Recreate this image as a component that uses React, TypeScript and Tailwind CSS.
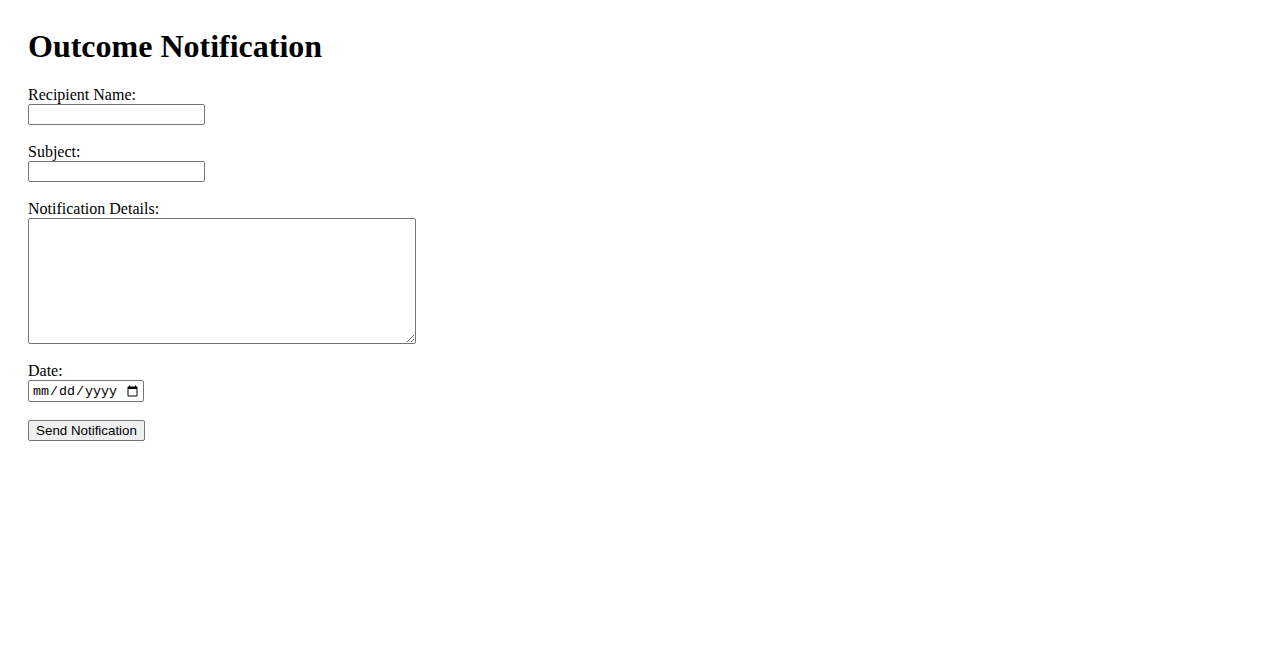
export default function App() {
  const inputCls =
    'block w-[177px] h-[21px] px-[2px] border border-[#767676] rounded-[2px] bg-white text-[13.33px] font-["Liberation_Sans",Arial,sans-serif]'

  return (
    <div className="min-h-screen bg-white p-[28px] text-black font-['Liberation_Serif','Times_New_Roman',serif]">
      <h1 className="text-[32px] font-bold leading-[37px] mb-[21px]">Outcome Notification</h1>
      <form onSubmit={(e) => e.preventDefault()}>
        <div className="mb-[18px]">
          <label htmlFor="recipient" className="block text-[16px] leading-[18px]">Recipient Name:</label>
          <input id="recipient" type="text" className={inputCls} />
        </div>
        <div className="mb-[18px]">
          <label htmlFor="subject" className="block text-[16px] leading-[18px]">Subject:</label>
          <input id="subject" type="text" className={inputCls} />
        </div>
        <div className="mb-[18px]">
          <label htmlFor="details" className="block text-[16px] leading-[18px]">Notification Details:</label>
          <textarea
            id="details"
            className="block w-[388px] h-[126px] p-[2px] border border-[#767676] rounded-[2px] bg-white resize text-[13.33px] font-['Liberation_Mono',monospace]"
          />
        </div>
        <div className="mb-[18px]">
          <label htmlFor="date" className="block text-[16px] leading-[18px]">Date:</label>
          <input
            id="date"
            type="date"
            className="block w-[116px] h-[22px] pt-[1px] pl-[3px] pr-[2px] border border-[#767676] rounded-[2px] bg-white text-[13.33px] text-black font-['Liberation_Mono',monospace]"
          />
        </div>
        <button
          type="submit"
          className="block w-[117px] h-[21px] px-[6px] border border-[#767676] rounded-[2px] bg-[#efefef] text-[13.33px] leading-[17px] text-black font-['Liberation_Sans',Arial,sans-serif]"
        >
          Send Notification
        </button>
      </form>
    </div>
  )
}
